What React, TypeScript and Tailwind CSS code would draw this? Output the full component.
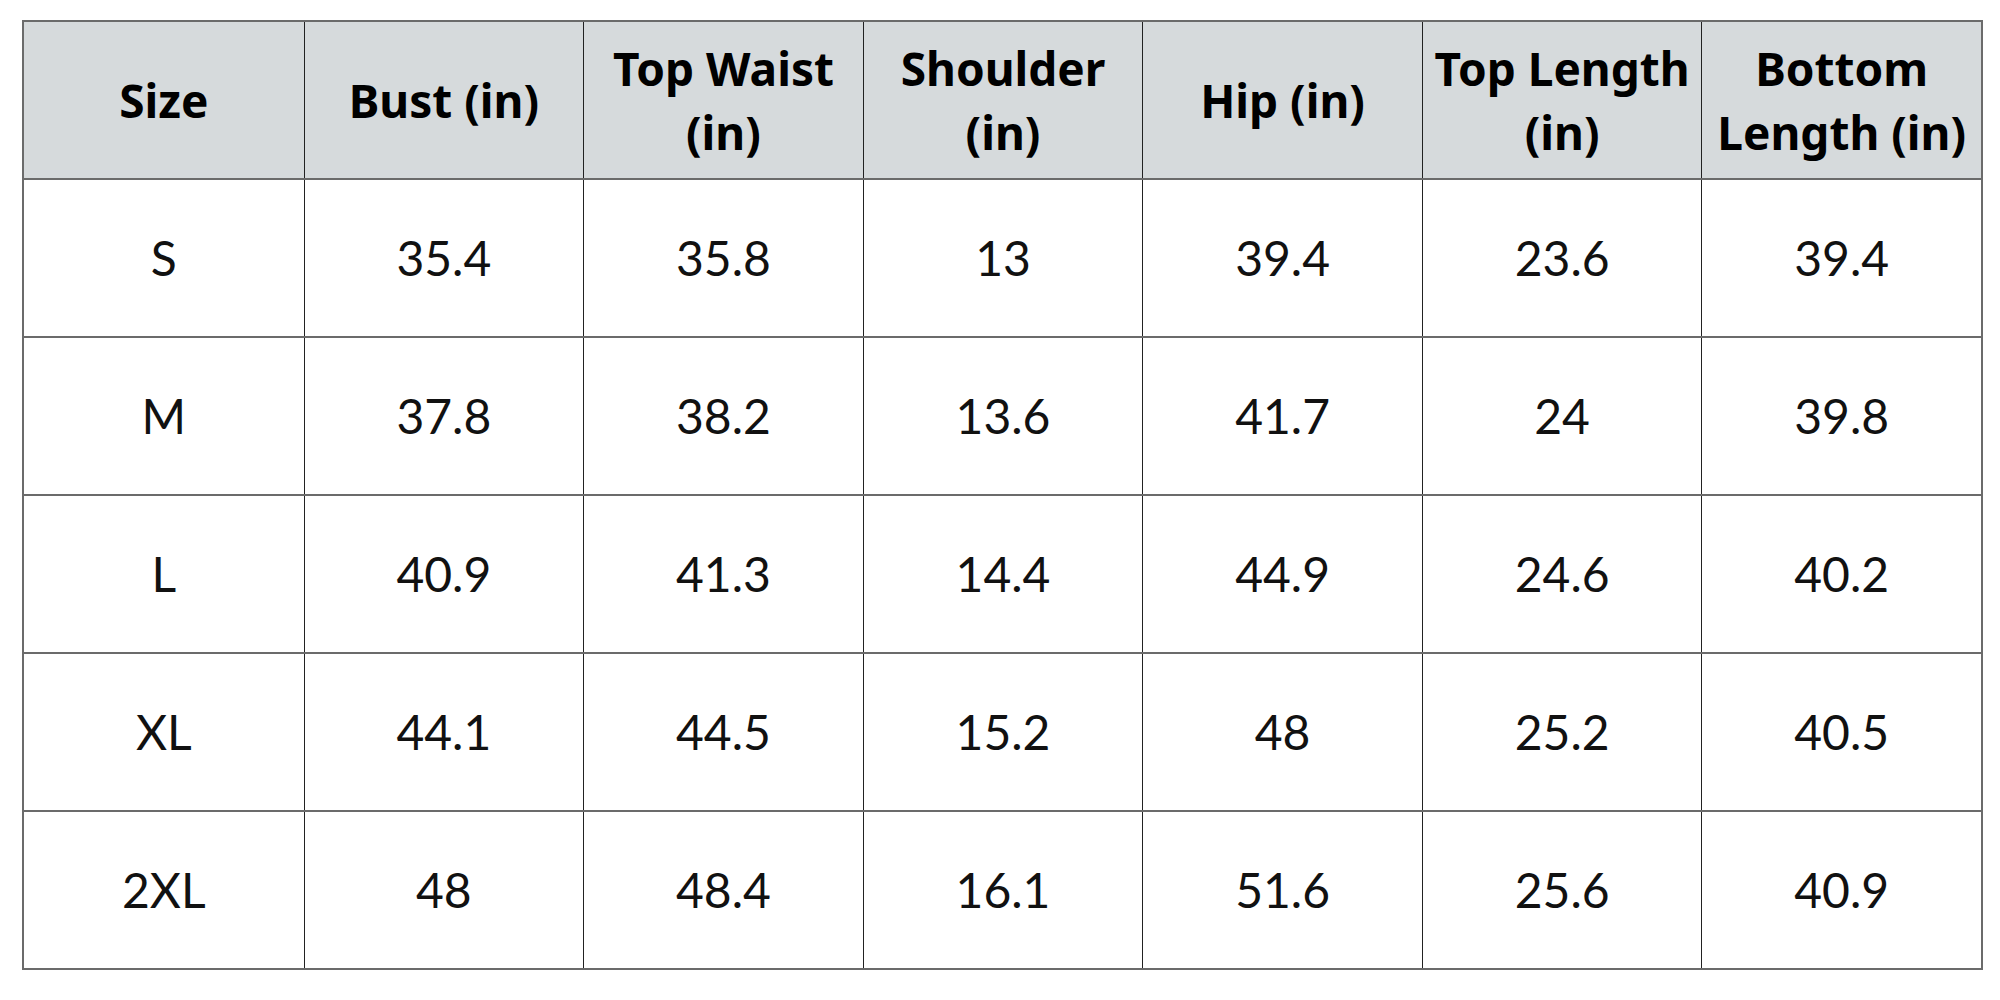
import React from 'react';

const headers = [
    ['Size'],
    ['Bust (in)'],
    ['Top Waist', '(in)'],
    ['Shoulder', '(in)'],
    ['Hip (in)'],
    ['Top Length', '(in)'],
    ['Bottom', 'Length (in)'],
];

const rows = [
    ['S', '35.4', '35.8', '13', '39.4', '23.6', '39.4'],
    ['M', '37.8', '38.2', '13.6', '41.7', '24', '39.8'],
    ['L', '40.9', '41.3', '14.4', '44.9', '24.6', '40.2'],
    ['XL', '44.1', '44.5', '15.2', '48', '25.2', '40.5'],
    ['2XL', '48', '48.4', '16.1', '51.6', '25.6', '40.9'],
];

export default function App() {
    return (
        <div className="w-[2000px] h-[1000px] bg-white pt-[20px] pl-[22px] font-['Lato','Liberation_Sans',sans-serif] text-black">
            <div className="w-[1961px] border-2 border-[#6b6b6b]">
                {/* header */}
                <div className="grid grid-cols-7 h-[156px] bg-[#d6dadc]">
                    {headers.map((lines, i) => (
                        <div
                            key={i}
                            className={`flex flex-col items-center justify-center text-center font-['Noto_Sans','Lato',sans-serif] font-bold text-[46px] leading-[64px] ${i > 0 ? 'border-l border-[#222]' : ''}`}
                        >
                            {lines.map((l, j) => (
                                <span key={j}>{l}</span>
                            ))}
                        </div>
                    ))}
                </div>

                {/* body */}
                {rows.map((row, r) => (
                    <div key={r} className="grid grid-cols-7 h-[158px] border-t-2 border-[#6b6b6b]">
                        {row.map((v, i) => (
                            <div
                                key={i}
                                className={`flex items-center justify-center text-[48px] text-[#111] ${i > 0 ? 'border-l border-[#222]' : ''}`}
                            >
                                {v}
                            </div>
                        ))}
                    </div>
                ))}
            </div>
        </div>
    );
}
